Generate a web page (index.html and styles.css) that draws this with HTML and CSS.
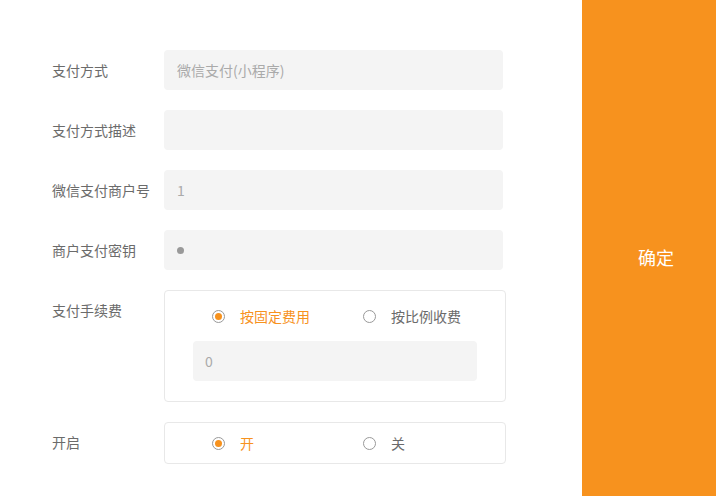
FILE: index.html
```html
<!DOCTYPE html>
<html>

<head>
    <meta charset="utf-8">
    <title>支付设置</title>
    <link rel="stylesheet" href="styles.css">
</head>

<body>
    <div class="page">
        <form class="form">
            <div class="row">
                <label class="lbl">支付方式</label>
                <input class="inp" type="text" value="微信支付(小程序)" readonly>
            </div>
            <div class="row">
                <label class="lbl">支付方式描述</label>
                <input class="inp" type="text" value="">
            </div>
            <div class="row">
                <label class="lbl">微信支付商户号</label>
                <input class="inp" type="text" value="1">
            </div>
            <div class="row">
                <label class="lbl">商户支付密钥</label>
                <div class="inp"><span class="dot"></span></div>
            </div>
            <div class="row">
                <label class="lbl">支付手续费</label>
                <div class="box fee">
                    <div class="radios">
                        <span class="opt on"><i class="rad"></i>按固定费用</span>
                        <span class="opt"><i class="rad"></i>按比例收费</span>
                    </div>
                    <input class="inp inner" type="text" value="0">
                </div>
            </div>
            <div class="row">
                <label class="lbl">开启</label>
                <div class="box">
                    <div class="radios">
                        <span class="opt on"><i class="rad"></i>开</span>
                        <span class="opt"><i class="rad"></i>关</span>
                    </div>
                </div>
            </div>
        </form>
        <div class="side">
            <button class="ok" type="button">确定</button>
        </div>
    </div>
</body>

</html>
```

FILE: styles.css
```css
html, body {
    margin: 0;
    overflow: hidden;
    background: #fff;
    font-family: "Noto Sans CJK SC", "Noto Sans", sans-serif;
    font-size: 14px;
}

.page {
    display: flex;
    width: 730px;
    height: 514px;
}

.form {
    width: 530px;
    padding: 50px 0 0 52px;
    display: flex;
    flex-direction: column;
    gap: 20px;
}

.row {
    display: flex;
    align-items: flex-start;
}

.lbl {
    width: 112px;
    line-height: 40px;
    color: #6b6b6b;
    white-space: nowrap;
}

.inp {
    box-sizing: border-box;
    width: 339px;
    height: 40px;
    border: 0;
    border-radius: 4px;
    background: #f4f4f4;
    padding: 0 13px;
    font-family: inherit;
    font-size: 14px;
    color: #aaa;
    outline: none;
    display: flex;
    align-items: center;
}

.dot {
    width: 7px;
    height: 7px;
    border-radius: 50%;
    background: #999;
}

.box {
    box-sizing: border-box;
    width: 342px;
    min-height: 42px;
    border: 1px solid #e8e8e8;
    border-radius: 4px;
    display: flex;
    flex-direction: column;
    justify-content: center;
}

.fee {
    padding: 15px 28px 20px;
}

.fee .radios {
    padding-left: 19px;
    margin-bottom: 15px;
}

.radios {
    display: flex;
    height: 20px;
    align-items: center;
    padding-left: 47px;
}

.opt {
    width: 151px;
    flex-shrink: 0;
    display: flex;
    align-items: center;
    color: #6b6b6b;
    line-height: 20px;
    white-space: nowrap;
}

.opt.on {
    color: #f7921e;
}

.rad {
    box-sizing: border-box;
    width: 13px;
    height: 13px;
    border: 1px solid #999;
    border-radius: 50%;
    margin-right: 15px;
    position: relative;
}

.on .rad::after {
    content: "";
    position: absolute;
    left: 2px;
    top: 2px;
    width: 7px;
    height: 7px;
    border-radius: 50%;
    background: #f7921e;
}

.inner {
    width: 284px;
    padding: 0 12px;
}

.side {
    width: 148px;
    background: #f7921e;
    display: flex;
}

.ok {
    flex: 1;
    border: 0;
    background: transparent;
    color: #fff;
    font-family: inherit;
    font-size: 18px;
}
```
